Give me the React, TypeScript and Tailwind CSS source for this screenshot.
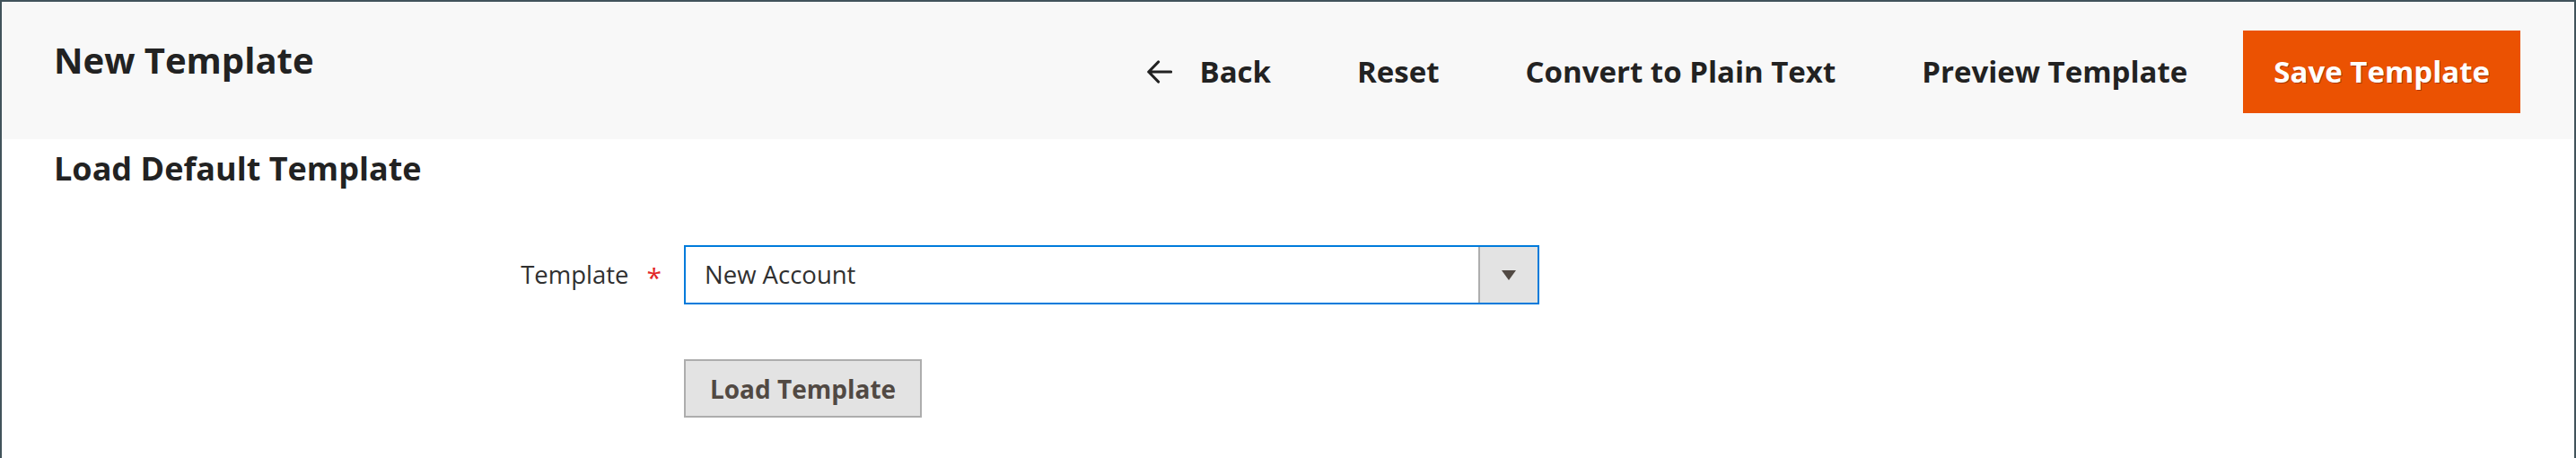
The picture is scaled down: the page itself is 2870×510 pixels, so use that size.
import React from "react";

const font = { fontFamily: '"Open Sans", "Noto Sans", Arial, sans-serif' };

function ArrowLeft() {
  return (
    <svg width="28" height="26" viewBox="0 0 28 26" fill="none" className="shrink-0">
      <path d="M26.5 13H1.8M12.5 2L1.8 13l10.7 11" stroke="#222" strokeWidth="3.2" strokeLinecap="round" strokeLinejoin="round" />
    </svg>
  );
}

export default function App() {
  return (
    <div
      className="w-[2870px] h-[510px] bg-white border-t-2 border-l-2 border-r-2 border-[#41535b] overflow-hidden text-[#222]"
      style={font}
    >
      {/* Page header */}
      <div className="h-[153px] bg-[#f8f8f8] flex items-start justify-between pl-[58px] pr-[60px]">
        <h1 className="mt-[40px] text-[40px] leading-[50px] font-bold">New Template</h1>
        <div className="flex items-center gap-[28px] mt-[32px]">
          <button className="flex items-center gap-[30px] px-[34px] h-[92px] text-[33px] font-bold">
            <ArrowLeft />
            Back
          </button>
          <button className="px-[34px] h-[92px] text-[33px] font-bold">Reset</button>
          <button className="px-[34px] h-[92px] text-[33px] font-bold">Convert to Plain Text</button>
          <button className="px-[34px] h-[92px] text-[33px] font-bold">Preview Template</button>
          <button className="px-[34px] h-[92px] text-[33px] font-bold bg-[#eb5202] text-white [text-shadow:1px_1px_0_rgba(0,0,0,0.3)]">
            Save Template
          </button>
        </div>
      </div>

      {/* Content */}
      <div className="pl-[58px] pr-[60px]">
        <h2 className="mt-[12px] text-[36px] leading-[42px] font-bold">Load Default Template</h2>

        <div className="mt-[64px] flex items-center">
          <div className="w-[702px] pr-[25px] flex items-center justify-end gap-[20px]">
            <span className="text-[27.5px] text-[#303030]">Template</span>
            <span className="text-[30px] leading-none text-[#e22626] mt-[6px]">*</span>
          </div>
          <div className="w-[953px] h-[66px] border-2 border-[#007bdb] bg-white flex items-stretch">
            <div className="flex-1 flex items-center pl-[21px] text-[27.5px] text-[#303030]">New Account</div>
            <div className="w-[66px] bg-[#e3e3e3] border-l-2 border-[#adadad] flex items-center justify-center">
              <svg width="16" height="11" viewBox="0 0 16 11">
                <path d="M0 0h16L8 11z" fill="#514943" />
              </svg>
            </div>
          </div>
        </div>

        <div className="mt-[61px] pl-[702px]">
          <button className="w-[265px] h-[65px] bg-[#e3e3e3] border-2 border-[#adadad] text-[28px] font-bold text-[#514943]">
            Load Template
          </button>
        </div>
      </div>
    </div>
  );
}
